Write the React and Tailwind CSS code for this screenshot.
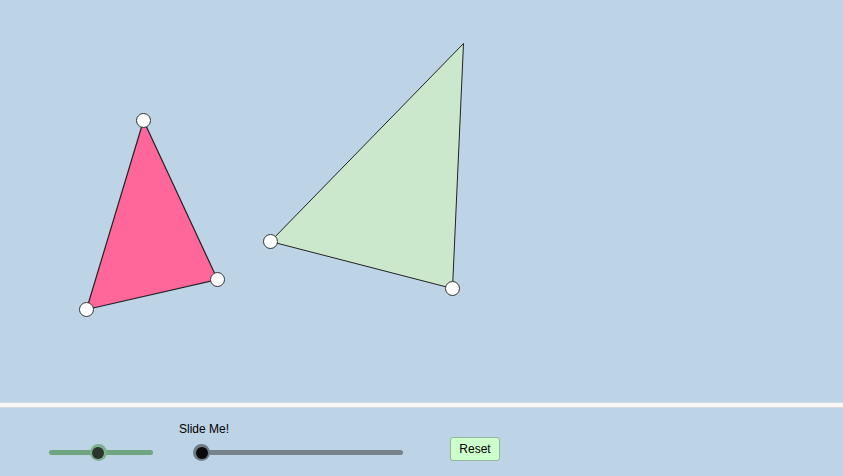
import React from "react";

function Point({ x, y }) {
  return <circle cx={x} cy={y} r="7" fill="#ffffff" stroke="#333333" strokeWidth="1" />;
}

function Slider({ width, value, track, ring, knob }) {
  return (
    <div className="relative h-[16px]" style={{ width }}>
      <div className={`absolute left-0 right-0 top-[6px] h-[5px] rounded-full ${track}`} />
      <div
        className={`absolute top-0 w-[17px] h-[17px] -ml-[8px] rounded-full flex items-center justify-center ${ring}`}
        style={{ left: `${value * 100}%` }}
      >
        <div className={`w-[12px] h-[12px] rounded-full ${knob}`} />
      </div>
    </div>
  );
}

export default function App() {
  return (
    <div className="w-[843px] h-[476px] flex flex-col bg-[#bdd3e6] overflow-hidden" style={{ fontFamily: '"Liberation Sans", Arial, sans-serif' }}>
      <div className="h-[402px] shrink-0">
        <svg width="843" height="402" viewBox="0 0 843 402">
          <polygon points="463.5,43.5 270.5,241.5 452.5,288.5" fill="#cce8cc" stroke="#222222" strokeWidth="1" />
          <polygon points="143.5,120.5 217.5,279.5 86.5,309.5" fill="#ff6699" stroke="#222222" strokeWidth="1.2" />
          <Point x={143.5} y={120.5} />
          <Point x={217.5} y={279.5} />
          <Point x={86.5} y={309.5} />
          <Point x={270.5} y={241.5} />
          <Point x={452.5} y={288.5} />
        </svg>
      </div>
      <div className="h-[6px] shrink-0 bg-[#f8f8f8] border-y border-[#d8d8d8]" />
      <div className="flex-1 flex items-start">
        <div className="ml-[49px] mt-[36px]">
          <Slider width={104} value={0.47} track="bg-[#6fa581]" ring="bg-[#7cb08e]" knob="bg-[#2b352e]" />
        </div>
        <div className="ml-[26px] mt-[14px] flex flex-col">
          <div className="text-[12px] leading-[14px] text-black">Slide Me!</div>
          <div className="ml-[22px] mt-[8px]">
            <Slider width={202} value={0} track="bg-[#76828c]" ring="bg-[#6e7a84]" knob="bg-[#0a0a0a]" />
          </div>
        </div>
        <button className="ml-[47px] mt-[29px] w-[50px] h-[24px] rounded-[3px] bg-[#ccffcc] border border-[#9ab39a] text-[12px] text-black flex items-center justify-center">
          Reset
        </button>
      </div>
    </div>
  );
}
